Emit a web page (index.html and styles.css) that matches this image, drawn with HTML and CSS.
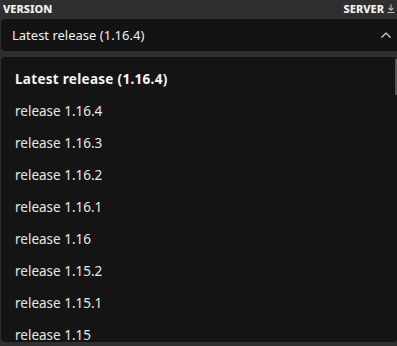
FILE: index.html
```html
<!DOCTYPE html>
<html lang="en">
<head>
    <meta charset="UTF-8">
    <title>Version picker</title>
    <link rel="stylesheet" href="styles.css">
</head>
<body>
    <div class="panel">
        <div class="head">
            <span class="label">VERSION</span>
            <span class="label server">SERVER
                <svg width="8" height="9" viewBox="0 0 8 9"><path d="M4 0.5V6M1.5 3.8L4 6.3L6.5 3.8M0.5 8.5H7.5" stroke="#bbb" stroke-width="1.1" fill="none"/></svg>
            </span>
        </div>
        <div class="select">
            <span>Latest release (1.16.4)</span>
            <svg width="10" height="6" viewBox="0 0 10 6"><path d="M0.5 5.5L5 1L9.5 5.5" stroke="#ddd" stroke-width="1.2" fill="none"/></svg>
        </div>
        <ul class="menu">
            <li class="current">Latest release (1.16.4)</li>
            <li>release 1.16.4</li>
            <li>release 1.16.3</li>
            <li>release 1.16.2</li>
            <li>release 1.16.1</li>
            <li>release 1.16</li>
            <li>release 1.15.2</li>
            <li>release 1.15.1</li>
            <li>release 1.15</li>
        </ul>
        <div class="scroll"></div>
    </div>
</body>
</html>
```
FILE: styles.css
```css
body {
    margin: 0;
    background: #2f2f2f;
    font-family: "Noto Sans", "Open Sans", sans-serif;
    color: #e6e6e6;
}

.panel {
    position: relative;
    height: 346px;
    overflow: hidden;
}

.head {
    display: flex;
    justify-content: space-between;
    align-items: center;
    height: 17px;
    padding: 0 2px 0 3px;
}

.label {
    font-size: 11px;
    font-weight: 800;
    color: #f2f2f2;
}

.server {
    display: flex;
    align-items: center;
    gap: 3px;
}

.select {
    margin: 2px 0 0 1px;
    height: 32px;
    background: #131313;
    border-radius: 4px 0 0 4px;
    display: flex;
    align-items: center;
    justify-content: space-between;
    padding: 0 6px 0 11px;
    font-size: 13px;
    color: #f0f0f0;
}

.menu {
    list-style: none;
    margin: 6px 0 0 1px;
    padding: 6px 0 0 0;
    background: #141414;
    border-radius: 4px;
    height: 279px;
    overflow: hidden;
}

.menu li {
    height: 32px;
    line-height: 32px;
    padding-left: 14px;
    font-size: 13.5px;
    color: #e8e8e8;
}

.menu li.current {
    font-weight: bold;
    letter-spacing: 0.3px;
    color: #f4f4f4;
}

.scroll {
    position: absolute;
    right: 0;
    top: 59px;
    width: 2px;
    height: 36px;
    background: #555;
}
```
